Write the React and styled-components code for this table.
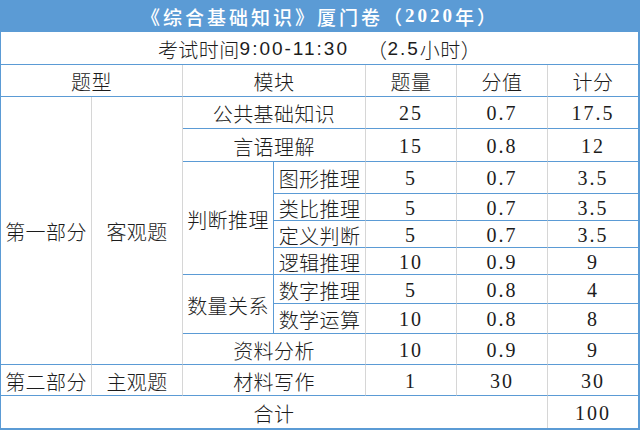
import React from 'react';
import styled, { createGlobalStyle } from 'styled-components';

const colors = {
  blue: '#5b9bd5',
  grey: '#d6d6d6',
  text: '#1c1c1c',
  white: '#ffffff',
};

const GlobalStyle = createGlobalStyle`
  body {
    margin: 0;
    padding: 0;
    background: ${colors.white};
    font-family: "Noto Sans CJK SC", sans-serif;
    text-spacing-trim: space-all;
  }
`;

const Sheet = styled.div`
  width: 640px;
  box-sizing: border-box;
  display: grid;
  grid-template-columns: 91px 91px 91px 92px 91px 91px 1fr;
  grid-template-rows: 32px 33px 32px 32px 33px 32px 27px 27px 27px 29px 30px 31px 31px 32px;
  border-left: 1px solid ${colors.blue};
  border-right: 2px solid ${colors.blue};
  border-bottom: 2px solid ${colors.blue};
  color: ${colors.text};
`;

const Cell = styled.div`
  grid-column: ${({ $col }) => $col};
  grid-row: ${({ $row }) => $row};
  box-sizing: border-box;
  display: flex;
  align-items: center;
  justify-content: center;
  padding-top: 2px;
  border-bottom: ${({ $last }) => ($last ? 'none' : `1px solid ${colors.blue}`)};
  border-right: ${({ $edge }) =>
    $edge === 'none' ? 'none' : `1px solid ${$edge === 'blue' ? colors.blue : colors.grey}`};
  font-family: "Liberation Serif", "Noto Sans CJK SC", serif;
  font-size: 20px;
  font-weight: 300;
  letter-spacing: ${({ $num }) => ($num ? '2px' : '0.4px')};
  white-space: nowrap;
`;

const TitleBar = styled.div`
  grid-column: 1 / -1;
  grid-row: 1;
  display: flex;
  align-items: center;
  justify-content: center;
  background: ${colors.blue};
  color: ${colors.white};
  font-family: "Liberation Serif", "Noto Sans CJK SC", serif;
  font-weight: 500;
  font-size: 19px;
  letter-spacing: 3px;
  padding-left: 2px;
  margin-left: -1px;
  white-space: pre;
`;

const Year = styled.span`
  font-weight: 700;
`;

const TimeRow = styled.div`
  grid-column: 1 / -1;
  grid-row: 2;
  display: flex;
  align-items: center;
  justify-content: center;
  border-bottom: 1px solid ${colors.blue};
  font-family: "Noto Sans CJK SC", sans-serif;
  font-size: 20px;
  font-weight: 300;
  letter-spacing: 0.4px;
  white-space: pre;
  padding-top: 2px;
`;

const Digits = styled.span`
  font-family: "Liberation Sans", sans-serif;
  font-size: 19px;
  letter-spacing: 2px;
`;

const Gap = styled.span`
  display: inline-block;
  width: ${({ $w }) => $w}px;
`;

const rows = [
  { row: 4, module: '公共基础知识', qty: '25', val: '0.7', score: '17.5' },
  { row: 5, module: '言语理解', qty: '15', val: '0.8', score: '12' },
  { row: 6, sub: '图形推理', qty: '5', val: '0.7', score: '3.5' },
  { row: 7, sub: '类比推理', qty: '5', val: '0.7', score: '3.5' },
  { row: 8, sub: '定义判断', qty: '5', val: '0.7', score: '3.5' },
  { row: 9, sub: '逻辑推理', qty: '10', val: '0.9', score: '9' },
  { row: 10, sub: '数字推理', qty: '5', val: '0.8', score: '4' },
  { row: 11, sub: '数学运算', qty: '10', val: '0.8', score: '8' },
  { row: 12, module: '资料分析', qty: '10', val: '0.9', score: '9' },
  { row: 13, module: '材料写作', qty: '1', val: '30', score: '30' },
];

export default function App() {
  return (
    <>
      <GlobalStyle />
      <Sheet>
        <TitleBar>
          《综合基础知识》厦门卷（<Year>2020</Year>年）
        </TitleBar>
        <TimeRow>
          考试时间<Digits>9:00-11:30</Digits>
          <Gap $w={18} />
          （<Digits>2.5</Digits>小时）
        </TimeRow>

        <Cell $col="1 / 3" $row="3">题型</Cell>
        <Cell $col="3 / 5" $row="3">模块</Cell>
        <Cell $col="5" $row="3">题量</Cell>
        <Cell $col="6" $row="3">分值</Cell>
        <Cell $col="7" $row="3" $edge="none">计分</Cell>

        <Cell $col="1" $row="4 / 13">第一部分</Cell>
        <Cell $col="2" $row="4 / 13">客观题</Cell>
        <Cell $col="3" $row="6 / 10" $edge="blue">判断推理</Cell>
        <Cell $col="3" $row="10 / 12" $edge="blue">数量关系</Cell>

        <Cell $col="1" $row="13">第二部分</Cell>
        <Cell $col="2" $row="13">主观题</Cell>

        {rows.map((r) => (
          <React.Fragment key={r.row}>
            {r.module ? (
              <Cell $col="3 / 5" $row={r.row}>{r.module}</Cell>
            ) : (
              <Cell $col="4" $row={r.row}>{r.sub}</Cell>
            )}
            <Cell $col="5" $row={r.row} $num>{r.qty}</Cell>
            <Cell $col="6" $row={r.row} $num>{r.val}</Cell>
            <Cell $col="7" $row={r.row} $num $edge="none">{r.score}</Cell>
          </React.Fragment>
        ))}

        <Cell $col="1 / 7" $row="14" $last>合计</Cell>
        <Cell $col="7" $row="14" $num $last $edge="none">100</Cell>
      </Sheet>
    </>
  );
}
